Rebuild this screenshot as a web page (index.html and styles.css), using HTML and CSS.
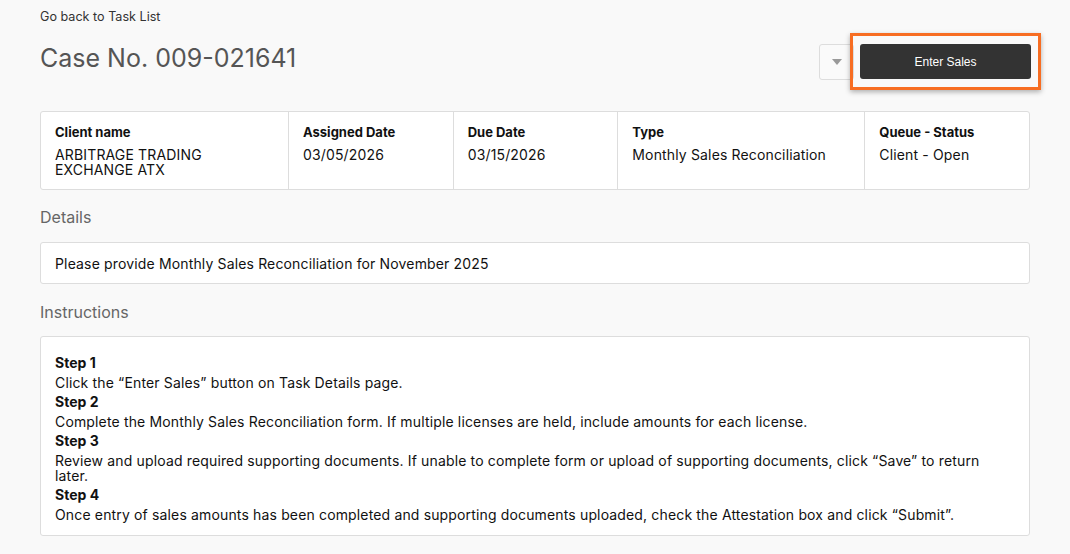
FILE: index.html
```html
<!DOCTYPE html>
<html>
<head>
<meta charset="utf-8">
<link rel="stylesheet" href="styles.css">
</head>
<body>
<div class="page">
  <a class="back" href="#">Go back to Task List</a>
  <div class="header">
    <h1 class="title">Case No. 009-021641</h1>
    <div class="actions">
      <button class="drop" type="button"><svg width="10" height="6" viewBox="0 0 10 6"><path d="M0 0 L10 0 L5 6 Z" fill="#999"/></svg></button>
      <div class="highlight"><button class="primary" type="button">Enter Sales</button></div>
    </div>
  </div>
  <div class="card info">
    <div class="cell wide"><div class="label">Client name</div><div class="value">ARBITRAGE TRADING<br>EXCHANGE ATX</div></div>
    <div class="cell"><div class="label">Assigned Date</div><div class="value">03/05/2026</div></div>
    <div class="cell"><div class="label">Due Date</div><div class="value">03/15/2026</div></div>
    <div class="cell wide"><div class="label">Type</div><div class="value">Monthly Sales Reconciliation</div></div>
    <div class="cell"><div class="label">Queue - Status</div><div class="value">Client - Open</div></div>
  </div>
  <h2 class="section">Details</h2>
  <div class="card details">Please provide Monthly Sales Reconciliation for November 2025</div>
  <h2 class="section section-instr">Instructions</h2>
  <div class="card steps">
    <div class="step">Step 1</div>
    <div>Click the “Enter Sales” button on Task Details page.</div>
    <div class="step">Step 2</div>
    <div>Complete the Monthly Sales Reconciliation form. If multiple licenses are held, include amounts for each license.</div>
    <div class="step">Step 3</div>
    <div>Review and upload required supporting documents. If unable to complete form or upload of supporting documents, click “Save” to return later.</div>
    <div class="step">Step 4</div>
    <div>Once entry of sales amounts has been completed and supporting documents uploaded, check the Attestation box and click “Submit”.</div>
  </div>
</div>
</body>
</html>
```
FILE: styles.css
```css
* { box-sizing: border-box; }
html, body { margin: 0; padding: 0; }
body {
  background: #f9f9f9;
  font-family: Inter, "Noto Sans", sans-serif;
  color: #111;
}
.page {
  padding: 9px 40px 0 40px;
  display: flex;
  flex-direction: column;
}
.back {
  font-size: 12.6px;
  color: #333;
  text-decoration: none;
  line-height: 16px;
}
.header {
  display: flex;
  justify-content: space-between;
  align-items: flex-start;
  margin-top: 2px;
}
.title {
  margin: 16px 0 0 0;
  font-size: 25px;
  font-weight: 400;
  color: #555;
  line-height: 30px;
}
.actions {
  display: flex;
  align-items: flex-start;
  margin-right: -11px;
}
.drop {
  width: 35px;
  height: 36px;
  margin-top: 17px;
  border: 1px solid #ddd;
  border-radius: 3px;
  background: #fafafa;
  display: flex;
  align-items: center;
  justify-content: center;
  padding: 0;
}
.highlight {
  margin-left: -4px;
  margin-top: 6px;
  border: 3px solid #f76d22;
  padding: 8px 7px;
  box-shadow: 0 2px 5px rgba(0,0,0,0.3);
  position: relative;
}
.primary {
  display: block;
  width: 171px;
  height: 35px;
  background: #333;
  color: #fff;
  border: none;
  border-radius: 3px;
  font-family: "Liberation Sans", Arial, sans-serif;
  font-size: 12px;
}
.card {
  background: #fff;
  border: 1px solid #ddd;
  border-radius: 3px;
}
.info {
  margin-top: 21px;
  display: grid;
  grid-template-columns: 1.5fr 1fr 1fr 1.5fr 1fr;
  height: 79px;
}
.cell {
  padding: 12px 14px 0 14px;
  border-left: 1px solid #ddd;
}
.cell:first-child { border-left: none; }
.label {
  font-size: 13px;
  font-weight: 700;
  line-height: 16px;
}
.value {
  margin-top: 7px;
  font-size: 14px;
  line-height: 15px;
  letter-spacing: 0.15px;
}
.section {
  margin: 17px 0 15px 0;
  font-size: 16px;
  font-weight: 400;
  color: #666;
  line-height: 20px;
}
.section-instr {
  margin: 18px 0 14px 0;
}
.details {
  height: 42px;
  padding: 0 14px;
  display: flex;
  align-items: center;
  font-size: 14px;
  letter-spacing: 0.15px;
}
.steps {
  padding: 18px 14px 13px 14px;
  font-size: 14px;
  line-height: 15px;
  letter-spacing: 0.15px;
  display: flex;
  flex-direction: column;
  gap: 4.5px;
}
.step { font-weight: 700; letter-spacing: 0; }
```
